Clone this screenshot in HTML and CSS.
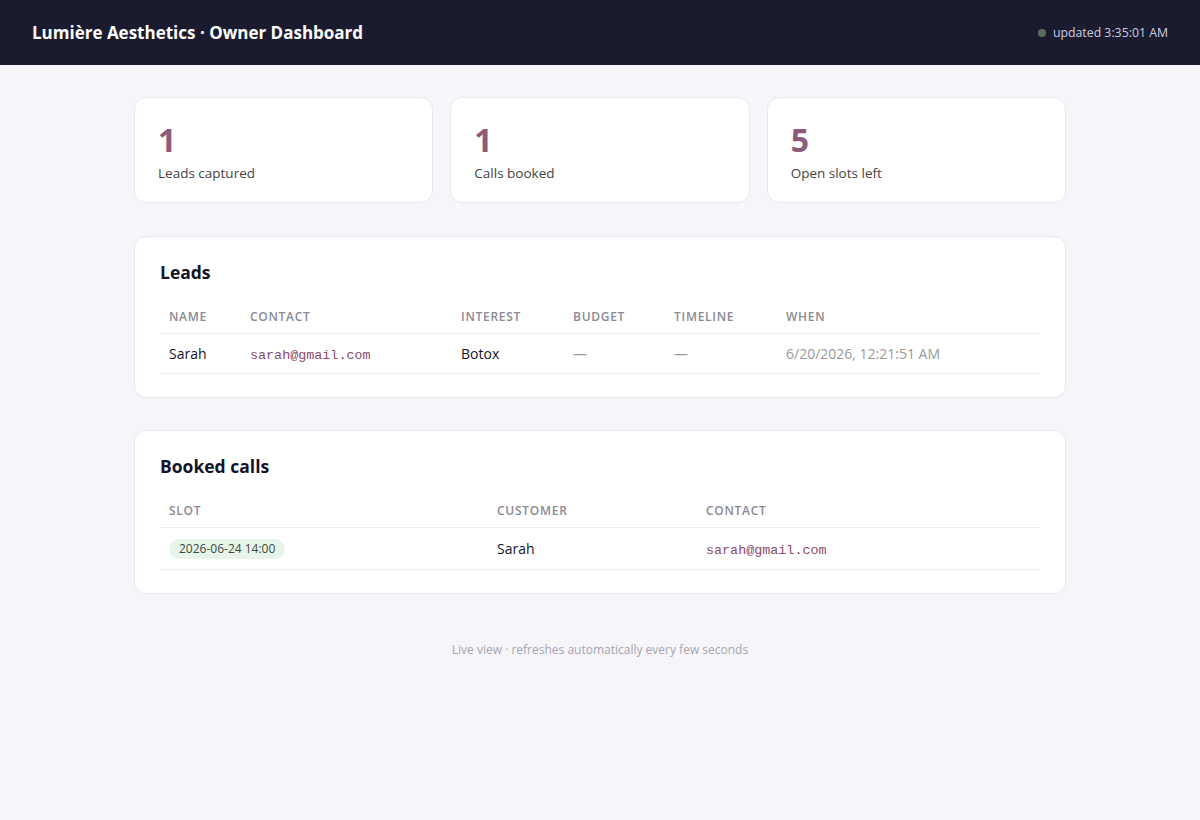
FILE: index.html
```html
<!DOCTYPE html>
<html lang="en">
<head>
  <meta charset="UTF-8" />
  <title>Lumière Aesthetics · Owner Dashboard</title>
  <meta name="viewport" content="width=device-width, initial-scale=1.0"/>
  <link rel="stylesheet" href="styles.css">
</head>
<body>
  <header class="topbar">
    <h1>Lumière Aesthetics · Owner Dashboard</h1>
    <div class="status"><span class="dot"></span>updated 3:35:01 AM</div>
  </header>

  <main class="wrap">
    <section class="stats">
      <div class="stat">
        <div class="num">1</div>
        <div class="label">Leads captured</div>
      </div>
      <div class="stat">
        <div class="num">1</div>
        <div class="label">Calls booked</div>
      </div>
      <div class="stat">
        <div class="num">5</div>
        <div class="label">Open slots left</div>
      </div>
    </section>

    <section class="card">
      <h2>Leads</h2>
      <table class="leads">
        <thead>
          <tr>
            <th>Name</th>
            <th>Contact</th>
            <th>Interest</th>
            <th>Budget</th>
            <th>Timeline</th>
            <th>When</th>
          </tr>
        </thead>
        <tbody>
          <tr>
            <td>Sarah</td>
            <td class="mono">sarah@gmail.com</td>
            <td>Botox</td>
            <td class="muted">—</td>
            <td class="muted">—</td>
            <td class="muted">6/20/2026, 12:21:51 AM</td>
          </tr>
        </tbody>
      </table>
    </section>

    <section class="card">
      <h2>Booked calls</h2>
      <table class="calls">
        <thead>
          <tr>
            <th>Slot</th>
            <th>Customer</th>
            <th>Contact</th>
          </tr>
        </thead>
        <tbody>
          <tr>
            <td><span class="pill">2026-06-24 14:00</span></td>
            <td>Sarah</td>
            <td class="mono">sarah@gmail.com</td>
          </tr>
        </tbody>
      </table>
    </section>

    <p class="foot">Live view · refreshes automatically every few seconds</p>
  </main>
</body>
</html>
```

FILE: styles.css
```css
body {
  font-family: "Open Sans", "Noto Sans", Arial, sans-serif;
  background: #f5f5fa;
  margin: 0;
  color: #1a1a2e;
}
.topbar {
  height: 65px;
  background: #1b1b2f;
  display: flex;
  align-items: center;
  justify-content: space-between;
  padding: 0 32px;
  box-sizing: border-box;
}
.topbar h1 {
  margin: 0;
  font-size: 17px;
  font-weight: 700;
  color: #fff;
}
.status {
  display: flex;
  align-items: center;
  gap: 7px;
  font-size: 12.3px;
  color: #c9cce0;
}
.dot {
  width: 8px;
  height: 8px;
  border-radius: 50%;
  background: #5b6b60;
}
.wrap {
  max-width: 932px;
  margin: 0 auto;
  padding-top: 32px;
}
.stats {
  display: grid;
  grid-template-columns: repeat(3, 1fr);
  gap: 17px;
}
.stat {
  background: #fff;
  border: 1px solid #e7e7ef;
  border-radius: 12px;
  padding: 22px 23px 20px;
  height: 106px;
  box-sizing: border-box;
}
.num {
  font-size: 32px;
  font-weight: 700;
  line-height: 40px;
  color: #8e5a7a;
}
.label {
  margin-top: 4px;
  font-size: 13.5px;
  color: #444;
}
.card {
  margin-top: 33px;
  background: #fff;
  border: 1px solid #e7e7ef;
  border-radius: 12px;
  padding: 22px 25px 23px;
}
.card + .card {
  margin-top: 32px;
}
.card h2 {
  margin: 0 0 15px;
  font-size: 17.5px;
  line-height: 26px;
  font-weight: 700;
  color: #141428;
}
table {
  width: 100%;
  border-collapse: collapse;
}
th {
  text-align: left;
  font-size: 12px;
  font-weight: 600;
  letter-spacing: 0.06em;
  text-transform: uppercase;
  color: #8a8a94;
  padding: 8px 9px 8px;
  border-bottom: 1px solid #ededf3;
}
td {
  font-size: 14px;
  padding: 10px 9px 10px;
  border-bottom: 1px solid #ededf3;
  color: #141428;
}
.mono {
  font-family: "Liberation Mono", "DejaVu Sans Mono", monospace;
  font-size: 13.4px;
  color: #8a4a6e;
  padding-top: 12px;
  padding-bottom: 8px;
}
.muted {
  color: #999;
}
.leads th:nth-child(1) { width: 63px; }
.leads th:nth-child(2) { width: 193px; }
.leads th:nth-child(3) { width: 94px; }
.leads th:nth-child(4) { width: 83px; }
.leads th:nth-child(5) { width: 94px; }
.calls th:nth-child(1) { width: 310px; }
.calls th:nth-child(2) { width: 191px; }
.pill {
  display: inline-block;
  background: #e6f4ea;
  color: #3c4a44;
  font-size: 12px;
  line-height: 20px;
  padding: 0 10px;
  border-radius: 10px;
}
.foot {
  text-align: center;
  font-size: 12px;
  color: #a6a6b0;
  margin-top: 47px;
}
```
